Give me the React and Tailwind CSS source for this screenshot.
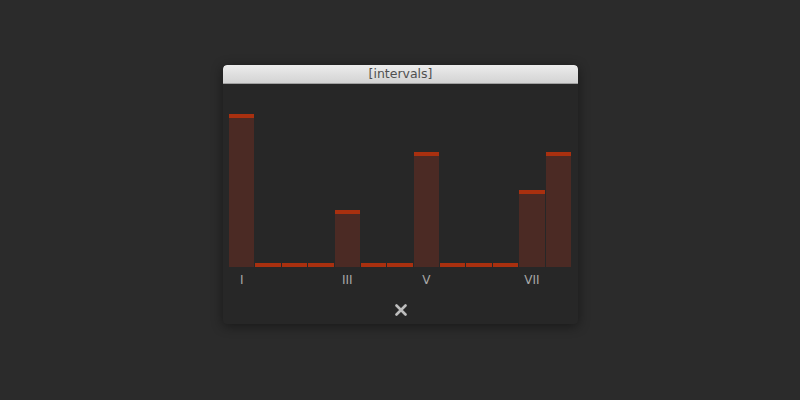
import React from "react";

const bars = [153, 4, 4, 4, 57, 4, 4, 115, 4, 4, 4, 77, 115];
const labels = ["I", "", "", "", "III", "", "", "V", "", "", "", "VII", ""];

export default function App() {
  return (
    <div className="w-[800px] h-[400px] bg-[#2b2b2b] pt-[65px] pl-[223px]" style={{ fontFamily: '"DejaVu Sans", "Liberation Sans", sans-serif' }}>
      <div className="w-[355px] h-[259px] bg-[#272727] rounded-[4px] shadow-[0_2px_12px_rgba(0,0,0,0.45)] flex flex-col overflow-hidden">
        <div className="h-[19px] shrink-0 bg-gradient-to-b from-[#ececec] to-[#d3d3d3] border-b border-[#a0a0a0] flex items-center justify-center text-[12.5px] text-[#505050] rounded-t-[4px]">
          [intervals]
        </div>
        <div className="pl-[6px] pr-[7px] pt-[16px]">
          <div className="grid grid-cols-[repeat(13,1fr)] gap-px h-[167px] items-end">
            {bars.map((h, i) => (
              <div key={i} className="bg-[#4b2a24] flex flex-col" style={{ height: h }}>
                <div className="h-[4px] bg-[#a9300f]" />
              </div>
            ))}
          </div>
          <div className="grid grid-cols-[repeat(13,1fr)] gap-px mt-[5px] h-[16px]">
            {labels.map((l, i) => (
              <div key={i} className="text-center text-[12px] leading-[16px] text-[#a8a8a8]">{l}</div>
            ))}
          </div>
        </div>
        <div className="flex justify-center mt-[16px]">
          <svg width="12" height="12" viewBox="0 0 12 12">
            <path d="M1.5 1.5 L10.5 10.5 M10.5 1.5 L1.5 10.5" stroke="#bdbdbd" strokeWidth="2.6" strokeLinecap="round" />
          </svg>
        </div>
      </div>
    </div>
  );
}
